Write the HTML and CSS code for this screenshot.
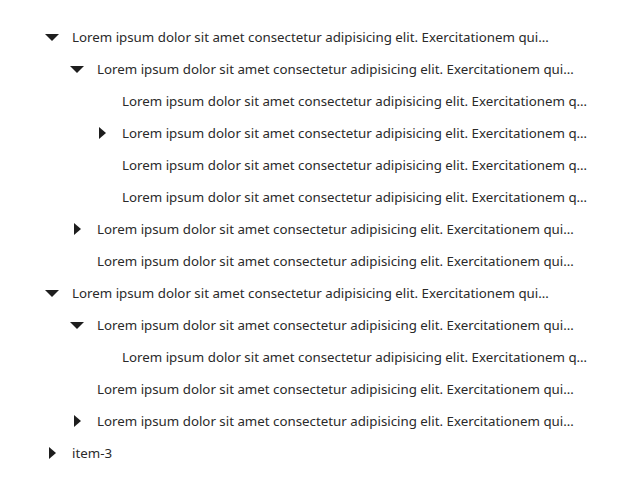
FILE: index.html
```html
<!DOCTYPE html>
<html>
<head>
<meta charset="utf-8">
<link rel="stylesheet" href="styles.css">
</head>
<body>
<div class="tree">
  <div class="row l0"><span class="tog down"></span><span class="label">Lorem ipsum dolor sit amet consectetur adipisicing elit. Exercitationem quibusdam voluptatibus natus.</span></div>
  <div class="row l1"><span class="tog down"></span><span class="label">Lorem ipsum dolor sit amet consectetur adipisicing elit. Exercitationem quibusdam voluptatibus natus.</span></div>
  <div class="row l2"><span class="tog"></span><span class="label">Lorem ipsum dolor sit amet consectetur adipisicing elit. Exercitationem quibusdam voluptatibus natus.</span></div>
  <div class="row l2"><span class="tog right"></span><span class="label">Lorem ipsum dolor sit amet consectetur adipisicing elit. Exercitationem quibusdam voluptatibus natus.</span></div>
  <div class="row l2"><span class="tog"></span><span class="label">Lorem ipsum dolor sit amet consectetur adipisicing elit. Exercitationem quibusdam voluptatibus natus.</span></div>
  <div class="row l2"><span class="tog"></span><span class="label">Lorem ipsum dolor sit amet consectetur adipisicing elit. Exercitationem quibusdam voluptatibus natus.</span></div>
  <div class="row l1"><span class="tog right"></span><span class="label">Lorem ipsum dolor sit amet consectetur adipisicing elit. Exercitationem quibusdam voluptatibus natus.</span></div>
  <div class="row l1"><span class="tog"></span><span class="label">Lorem ipsum dolor sit amet consectetur adipisicing elit. Exercitationem quibusdam voluptatibus natus.</span></div>
  <div class="row l0"><span class="tog down"></span><span class="label">Lorem ipsum dolor sit amet consectetur adipisicing elit. Exercitationem quibusdam voluptatibus natus.</span></div>
  <div class="row l1"><span class="tog down"></span><span class="label">Lorem ipsum dolor sit amet consectetur adipisicing elit. Exercitationem quibusdam voluptatibus natus.</span></div>
  <div class="row l2"><span class="tog"></span><span class="label">Lorem ipsum dolor sit amet consectetur adipisicing elit. Exercitationem quibusdam voluptatibus natus.</span></div>
  <div class="row l1"><span class="tog"></span><span class="label">Lorem ipsum dolor sit amet consectetur adipisicing elit. Exercitationem quibusdam voluptatibus natus.</span></div>
  <div class="row l1"><span class="tog right"></span><span class="label">Lorem ipsum dolor sit amet consectetur adipisicing elit. Exercitationem quibusdam voluptatibus natus.</span></div>
  <div class="row l0"><span class="tog right"></span><span class="label">item-3</span></div>
</div>
</body>
</html>
```
FILE: styles.css
```css
html, body {
  margin: 0;
  padding: 0;
  background: #ffffff;
}
body {
  font-family: "Noto Sans", "DejaVu Sans", sans-serif;
  font-size: 13.3px;
  color: #2a2a2a;
}
.tree {
  width: 550px;
  padding: 21px 0 0 42px;
  overflow: hidden;
}
.row {
  display: flex;
  align-items: center;
  height: 32px;
  gap: 10px;
}
.l1 { padding-left: 25px; }
.l2 { padding-left: 50px; }
.tog {
  flex: none;
  width: 20px;
  height: 32px;
  position: relative;
}
.tog.down::before {
  content: "";
  position: absolute;
  left: 3px;
  top: 13px;
  border-left: 7px solid transparent;
  border-right: 7px solid transparent;
  border-top: 7px solid #1e1e1e;
}
.tog.right::before {
  content: "";
  position: absolute;
  left: 7px;
  top: 10px;
  border-top: 6px solid transparent;
  border-bottom: 6px solid transparent;
  border-left: 7px solid #1e1e1e;
}
.label {
  min-width: 0;
  max-width: 481px;
  white-space: nowrap;
  overflow: hidden;
  text-overflow: ellipsis;
  line-height: 32px;
}
```
